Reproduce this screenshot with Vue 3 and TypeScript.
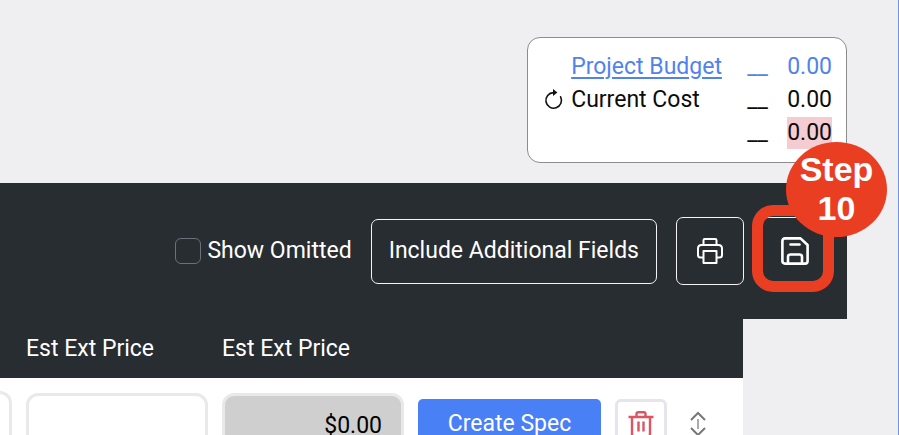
<script setup lang="ts">
import { ref } from 'vue'

interface Total {
  label: string
  amount: string
  kind: 'budget' | 'cost' | 'balance'
}

const totals: Total[] = [
  { label: 'Project Budget', amount: '0.00', kind: 'budget' },
  { label: 'Current Cost', amount: '0.00', kind: 'cost' },
  { label: '', amount: '0.00', kind: 'balance' },
]

const showOmitted = ref(false)
const quantity = ref('')
const unitPrice = ref('')
const extPrice = ref('$0.00')
</script>

<template>
  <div class="page">
    <header class="summary">
      <section class="card">
        <div v-for="t in totals" :key="t.kind" class="total" :class="t.kind">
          <button v-if="t.kind === 'cost'" class="refresh" aria-label="Refresh">
            <svg viewBox="0 0 20 22" width="20" height="22" fill="none">
              <path d="M9.5 3.600A7.800 7.800 0 1 0 16.600 7.800" stroke="#111" stroke-width="1.600" stroke-linecap="round" />
              <path d="M9 0 13.400 3.600 9 7z" fill="#111" />
            </svg>
          </button>
          <span v-else></span>
          <a v-if="t.kind === 'budget'" href="#" class="label">{{ t.label }}</a>
          <span v-else class="label">{{ t.label }}</span>
          <span class="dash">__</span>
          <span class="amount">{{ t.amount }}</span>
        </div>
      </section>
    </header>

    <div class="toolbar">
      <label class="omitted">
        <input v-model="showOmitted" type="checkbox" />
        Show Omitted
      </label>
      <button class="outline fields">Include Additional Fields</button>
      <div class="icons">
        <button class="outline square" aria-label="Print">
          <svg viewBox="0 0 28 28" width="28" height="28" fill="none" stroke="#fff" stroke-width="2" stroke-linejoin="round">
            <path d="M7.5 8V3.200q0-1.200 1.200-1.200h10.600q1.200 0 1.200 1.200V8" />
            <path d="M7.500 20.500H4.500Q2 20.500 2 18V11.500Q2 8 5.500 8h17Q26 8 26 11.500V18q0 2.500-2.500 2.500h-3" />
            <path d="M7.500 14h13v12h-13z" />
          </svg>
        </button>
        <div class="target">
          <button class="outline square" aria-label="Save">
            <svg viewBox="0 0 28 28" width="28" height="28" fill="none" stroke="#fff" stroke-width="2.600" stroke-linecap="round" stroke-linejoin="round">
              <path d="M4 1.400h15.500L26.600 8v16q0 2.600-2.600 2.600H4q-2.600 0-2.600-2.600V4q0-2.600 2.600-2.600z" />
              <path d="M7 26.500V20q0-2.500 2.500-2.500h9Q21 17.500 21 20v6.500M9.500 7.500h9" />
            </svg>
          </button>
          <div class="ring"></div>
          <div class="badge">Step<br />10</div>
        </div>
      </div>
    </div>

    <table class="items">
      <colgroup>
        <col class="c-edge" />
        <col class="c-field" />
        <col class="c-field" />
        <col class="c-spec" />
        <col class="c-trash" />
        <col />
      </colgroup>
      <thead>
        <tr>
          <th></th>
          <th>Est Ext Price</th>
          <th>Est Ext Price</th>
          <th></th>
          <th></th>
          <th></th>
        </tr>
      </thead>
      <tbody>
        <tr>
          <td><input v-model="quantity" class="field tall" aria-label="Quantity" /></td>
          <td><input v-model="unitPrice" class="field" aria-label="Est Ext Price" /></td>
          <td><input v-model="extPrice" class="field filled" aria-label="Est Ext Price total" readonly /></td>
          <td><button class="spec">Create Spec</button></td>
          <td>
            <button class="trash" aria-label="Delete">
              <svg viewBox="0 0 26 28" width="26" height="28" fill="none" stroke="#dc5560" stroke-width="2.400">
                <path d="M.5 7h25M8.500 7V4q0-1.800 1.800-1.800h5.400q1.800 0 1.800 1.800v3M4 7v17q0 2.500 2.500 2.500h13q2.500 0 2.500-2.500V7M10.500 11.500v10M15.500 11.500v10" />
              </svg>
            </button>
          </td>
          <td>
            <button class="move" aria-label="Reorder">
              <svg viewBox="0 0 16 26" width="16" height="26" fill="none" stroke="#777" stroke-width="2">
                <path d="M1 9l7-7 7 7M1 17l7 7 7-7" />
                <path d="M8 8v10" stroke="#aaa" />
              </svg>
            </button>
          </td>
        </tr>
      </tbody>
    </table>
  </div>
</template>

<style>
body {
  background: #efeff1;
}
</style>

<style scoped>
.page {
  box-sizing: border-box;
  height: 100vh;
  overflow: hidden;
  border-right: 1px solid #6c93dc;
  background: #efeff1;
  color: #0c0c0c;
  font-family: Roboto, 'Liberation Sans', sans-serif;
  font-size: 23px;
  line-height: 32px;
}
button,
input {
  box-sizing: border-box;
  margin: 0;
  font: inherit;
}
button {
  padding: 0;
  border: 0;
  background: none;
  color: inherit;
}
svg {
  display: block;
}
.summary {
  display: flex;
  justify-content: flex-end;
  padding: 37px 51px 20px 0;
}
.card {
  display: flex;
  flex-direction: column;
  padding: 12px 14px 13px 16px;
  border: 1px solid #8c8c8c;
  border-radius: 13px;
  background: #fff;
}
.total {
  display: grid;
  grid-template-columns: 27px 176px 40px auto;
  align-items: center;
  height: 33px;
}
.label {
  color: inherit;
}
a.label {
  text-decoration-thickness: 2px;
  text-underline-offset: 3px;
}
.budget {
  color: #5083ee;
}
.balance .amount {
  background: #f5ccd1;
}
.toolbar {
  display: flex;
  align-items: center;
  justify-content: flex-end;
  gap: 19px;
  height: 136px;
  box-sizing: border-box;
  margin-right: 51px;
  padding-right: 18px;
  background: #282d31;
  color: #fff;
}
.omitted {
  display: flex;
  align-items: center;
  gap: 6px;
}
.omitted input {
  appearance: none;
  width: 26px;
  height: 26px;
  border: 1px solid #6e6e7c;
  border-radius: 6px;
}
.outline {
  border: 1px solid #f4f4f4;
  border-radius: 7px;
}
.fields {
  height: 65px;
  padding: 0 17px;
}
.icons {
  display: flex;
  gap: 17px;
}
.square {
  display: grid;
  place-items: center;
  width: 68px;
  height: 68px;
}
.target {
  position: relative;
}
.ring {
  position: absolute;
  inset: -12px -5px -7px -9px;
  border: 11px solid #ea3e23;
  border-radius: 21px;
}
.badge {
  position: absolute;
  top: -75px;
  left: 25px;
  box-sizing: border-box;
  width: 101px;
  height: 95px;
  padding-top: 8px;
  border-radius: 50%;
  background: #ea3e23;
  font: bold 34px/39px 'Liberation Sans', Arial, sans-serif;
  text-align: center;
}
.items {
  width: calc(100% - 155px);
  table-layout: fixed;
  border-collapse: collapse;
  background: #fff;
}
.c-edge {
  width: 19px;
}
.c-field {
  width: 196px;
}
.c-spec {
  width: 197px;
}
.c-trash {
  width: 66px;
}
th {
  height: 59px;
  padding: 0 7px;
  background: #282d31;
  color: #fff;
  font-weight: 400;
  text-align: left;
}
td {
  height: 92px;
  padding: 0 7px;
}
td:first-child {
  padding-left: 0;
}
.field {
  display: block;
  width: 100%;
  height: 62px;
  padding: 2px 19px 0;
  border: 3px solid #e9e9ea;
  border-radius: 12px;
  background: #fff;
  text-align: right;
}
.tall {
  height: 66px;
  padding: 0;
  border-left: 0;
  border-radius: 0 12px 12px 0;
}
.filled {
  background: #cfcfcf;
}
.spec {
  display: block;
  width: 100%;
  height: 50px;
  border-radius: 5px;
  background: #4a80f5;
  color: #fff;
}
.trash {
  display: grid;
  place-items: center;
  width: 100%;
  height: 50px;
  border: 3px solid #e5e5eb;
  border-radius: 6px;
}
.move {
  display: block;
  margin-left: 9px;
}
</style>
